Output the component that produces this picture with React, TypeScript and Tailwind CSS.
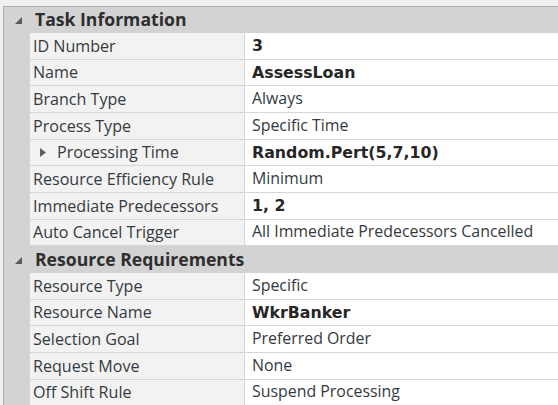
import React from "react";

type Row = { label: string; value: string; bold?: boolean; expand?: boolean };

const task: Row[] = [
  { label: "ID Number", value: "3", bold: true },
  { label: "Name", value: "AssessLoan", bold: true },
  { label: "Branch Type", value: "Always" },
  { label: "Process Type", value: "Specific Time" },
  { label: "Processing Time", value: "Random.Pert(5,7,10)", bold: true, expand: true },
  { label: "Resource Efficiency Rule", value: "Minimum" },
  { label: "Immediate Predecessors", value: "1, 2", bold: true },
  { label: "Auto Cancel Trigger", value: "All Immediate Predecessors Cancelled" },
];

const resource: Row[] = [
  { label: "Resource Type", value: "Specific" },
  { label: "Resource Name", value: "WkrBanker", bold: true },
  { label: "Selection Goal", value: "Preferred Order" },
  { label: "Request Move", value: "None" },
  { label: "Off Shift Rule", value: "Suspend Processing" },
];

function Category({ title, first }: { title: string; first?: boolean }) {
  return (
    <div className={`flex items-center ${first ? "h-[26px]" : "h-[26.67px]"} bg-[#d3d3d3]`}>
      <svg width="8" height="8" viewBox="0 0 8 8" className="ml-[11px] mt-[2px] shrink-0">
        <polygon points="7,0 7,7 0,7" fill="#5a5a5a" />
      </svg>
      <span
        className="ml-[12px] text-[17.6px] font-bold text-[#2e2e2e] leading-none whitespace-nowrap"
        style={{ fontFamily: '"Open Sans", sans-serif' }}
      >
        {title}
      </span>
    </div>
  );
}

function PropRow({ row }: { row: Row }) {
  return (
    <div className="flex h-[26.67px] ml-[26px] border-b border-[#d6d6d6] box-border">
      <div
        className="w-[215px] shrink-0 bg-[#f2f2f2] border-r border-[#d6d6d6] flex items-center text-[16.1px] text-[#343a40] whitespace-nowrap overflow-hidden"
        style={{ fontFamily: '"Open Sans", sans-serif' }}
      >
        {row.expand ? (
          <>
            <svg width="6" height="9" viewBox="0 0 6 9" className="ml-[10px] shrink-0">
              <polygon points="0,0 6,4.5 0,9" fill="#606060" />
            </svg>
            <span className="ml-[11px]">{row.label}</span>
          </>
        ) : (
          <span className="ml-[3px]">{row.label}</span>
        )}
      </div>
      <div className="flex-1 bg-white flex items-center pl-[7px] whitespace-nowrap overflow-hidden">
        {row.bold ? (
          <span
            className="text-[15.8px] font-bold text-[#262626]"
            style={{ fontFamily: '"DejaVu Sans", sans-serif' }}
          >
            {row.value}
          </span>
        ) : (
          <span
            className="text-[15.9px] text-[#343a40]"
            style={{ fontFamily: '"Open Sans", sans-serif' }}
          >
            {row.value}
          </span>
        )}
      </div>
    </div>
  );
}

export default function App() {
  return (
    <div className="w-[558px] h-[405px] overflow-hidden bg-[#f0f0f0]">
      <div className="mt-[6px] ml-[3px] h-[399px] border-t border-l border-[#b0b0b0] bg-[#d3d3d3] overflow-hidden">
        <Category title="Task Information" first />
        {task.map((r) => (
          <PropRow key={r.label} row={r} />
        ))}
        <Category title="Resource Requirements" />
        {resource.map((r) => (
          <PropRow key={r.label} row={r} />
        ))}
      </div>
    </div>
  );
}
